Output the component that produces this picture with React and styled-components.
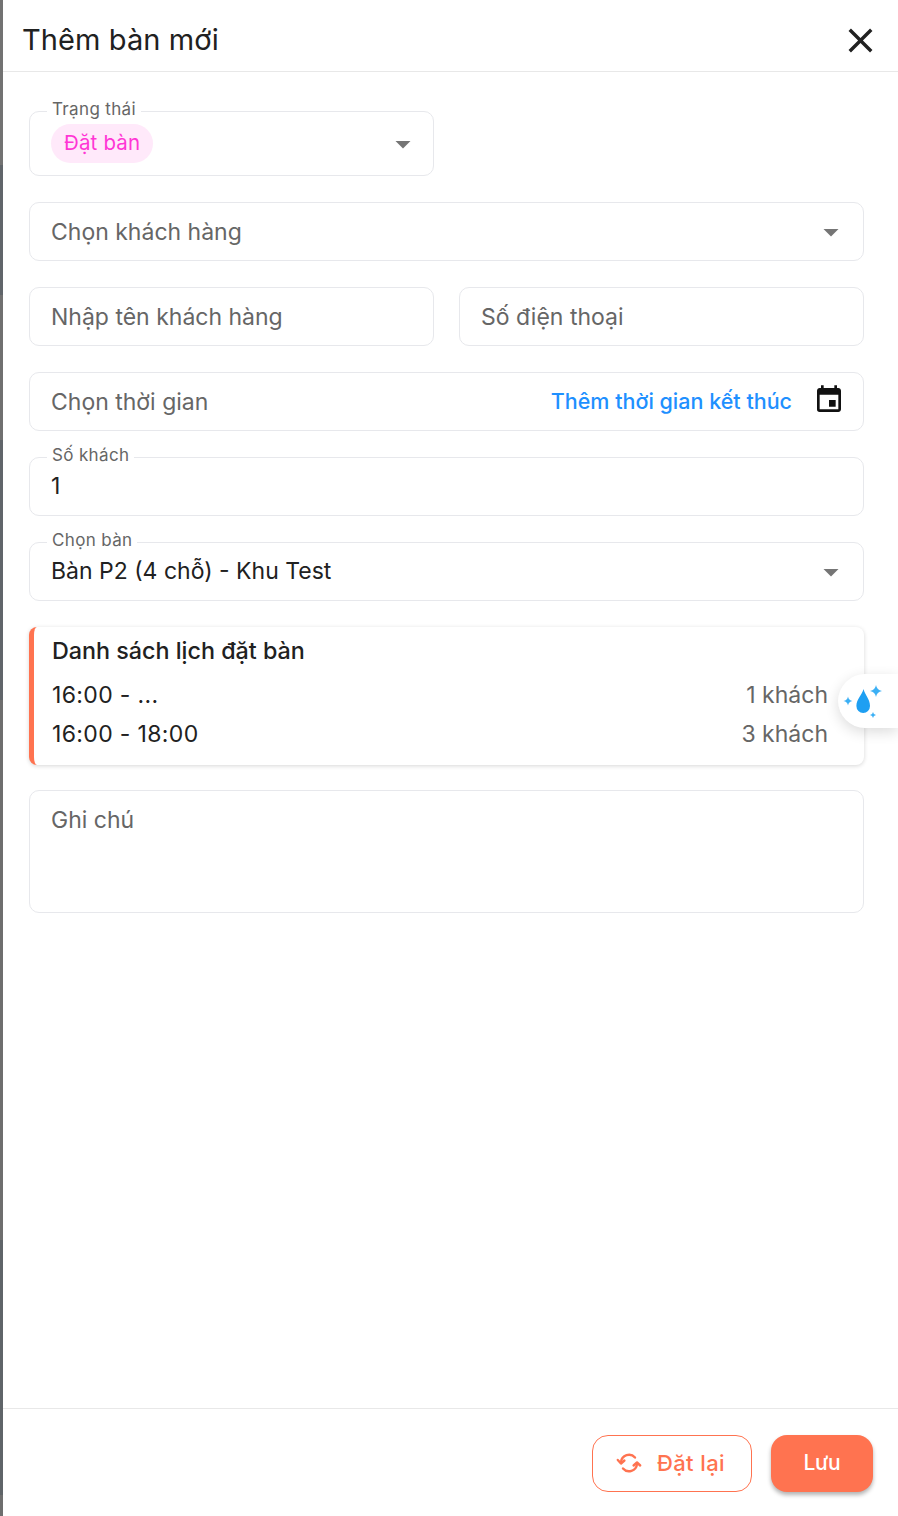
import React from 'react';
import styled, { createGlobalStyle } from 'styled-components';
import { MdClose, MdEvent, MdArrowDropDown } from 'react-icons/md';

const GlobalStyle = createGlobalStyle`
  html, body {
    margin: 0;
    padding: 0;
    background: #fff;
  }
  * {
    box-sizing: border-box;
  }
`;

const Backdrop = styled.div`
  position: relative;
  width: 898px;
  height: 1516px;
  overflow: hidden;
  padding-left: 3px;
  background: linear-gradient(
    #727272 0 165px,
    #60656a 165px 295px,
    #707070 295px 440px,
    #60656a 440px 700px,
    #6e6e6e 700px 1240px,
    #5f6468 1240px 1495px,
    #6e6e6e 1495px
  );
  font-family: Inter, "Noto Sans", sans-serif;
  color: #212121;
`;

const Panel = styled.div`
  display: flex;
  flex-direction: column;
  height: 100%;
  background: #fff;
`;

const Header = styled.header`
  display: flex;
  align-items: center;
  justify-content: space-between;
  height: 72px;
  padding: 8px 17px 0 19px;
  border-bottom: 1px solid #e8e8e8;
  flex-shrink: 0;
`;

const Title = styled.h1`
  margin: 0;
  font-size: 29px;
  font-weight: 400;
  letter-spacing: 0.1px;
  color: #212121;
`;

const CloseButton = styled.button`
  display: flex;
  padding: 0;
  border: 0;
  background: none;
  color: #212121;
  font-size: 41px;
  margin-top: 1px;
`;

const Form = styled.main`
  flex: 1;
  display: flex;
  flex-direction: column;
  gap: 26px;
  padding: 39px 34px 0 26px;
`;

const Row = styled.div`
  display: grid;
  grid-template-columns: 1fr 1fr;
  gap: 25px;
`;

const Field = styled.div`
  position: relative;
  display: flex;
  align-items: center;
  justify-content: space-between;
  height: ${p => p.$height || 59}px;
  padding: 0 ${p => p.$right || 22}px 0 21px;
  border: 1px solid #e7e8ec;
  border-radius: 10px;
  font-size: 23px;
  letter-spacing: 0;
`;

const Legend = styled.label`
  position: absolute;
  top: -13px;
  left: 17px;
  padding: 0 5px;
  background: #fff;
  font-size: 17px;
  letter-spacing: 0.35px;
  line-height: 20px;
  color: #666;
`;

const Placeholder = styled.span`
  color: #666;
`;

const Value = styled.span`
  color: #212121;
  margin-top: -1px;
`;

const Chip = styled.span`
  display: inline-flex;
  align-items: center;
  height: 39px;
  padding: 0 13px 2px;
  border-radius: 20px;
  background: #ffe9fa;
  color: #ff36d5;
  font-size: 20.5px;
  letter-spacing: 0.15px;
`;

const Caret = styled(MdArrowDropDown)`
  flex-shrink: 0;
  font-size: 36px;
  color: #757575;
`;

const AddEnd = styled.span`
  margin-left: auto;
  margin-right: 21px;
  margin-top: -2px;
  font-size: 21.5px;
  letter-spacing: 0;
  font-weight: 500;
  color: #1e90ff;
`;

const CalendarIcon = styled(MdEvent)`
  flex-shrink: 0;
  font-size: 32px;
  color: #111;
  margin-top: -4px;
`;

const ScheduleCard = styled.section`
  display: flex;
  flex-direction: column;
  height: 138px;
  padding: 10px 36px 0 18px;
  margin-bottom: -1px;
  border-left: 5px solid #ff7350;
  border-radius: 8px;
  background: #fff;
  box-shadow: 0 1px 4px rgba(0, 0, 0, 0.16);
`;

const CardTitle = styled.h2`
  margin: 0 0 15px;
  font-size: 23.3px;
  line-height: 28px;
  font-weight: 500;
  letter-spacing: 0;
`;

const Booking = styled.div`
  display: flex;
  justify-content: space-between;
  height: 39px;
  font-size: 23px;
  line-height: 30px;
  letter-spacing: 0.35px;
`;

const Guests = styled.span`
  color: #666;
  letter-spacing: 0;
`;

const NoteField = styled.div`
  height: 123px;
  padding: 15px 21px;
  border: 1px solid #e7e8ec;
  border-radius: 10px;
  font-size: 23px;
  line-height: 28px;
  color: #666;
`;

const Footer = styled.footer`
  display: flex;
  justify-content: flex-end;
  gap: 19px;
  height: 108px;
  padding: 26px 25px 0 0;
  border-top: 1px solid #e8e8e8;
  flex-shrink: 0;
`;

const ResetButton = styled.button`
  display: flex;
  align-items: center;
  justify-content: center;
  gap: 15px;
  width: 160px;
  height: 57px;
  padding: 0 3px 2px 0;
  border: 1px solid #ff7350;
  border-radius: 16px;
  background: #fff;
  color: #ff7350;
  font: 500 22px Inter, "Noto Sans", sans-serif;
  letter-spacing: 0.4px;
`;

const SaveButton = styled.button`
  width: 102px;
  height: 57px;
  padding: 0 0 2px;
  border: 0;
  border-radius: 16px;
  background: #ff7350;
  color: #fff;
  font: 500 21px Inter, "Noto Sans", sans-serif;
  letter-spacing: -0.3px;
  box-shadow: 0 3px 4px rgba(0, 0, 0, 0.3);
`;

const FloatingTab = styled.div`
  position: absolute;
  top: 674px;
  right: 0;
  display: flex;
  align-items: center;
  width: 60px;
  height: 54px;
  padding-left: 5px;
  border-radius: 27px 0 0 27px;
  background: #fff;
  box-shadow: 0 4px 14px rgba(0, 0, 0, 0.14);
`;

const DropSparkle = () => (
  <svg width="40" height="40" viewBox="0 0 40 40">
    <path d="M20.5 8 C22 14 27 18 27 25 A6.8 7 0 0 1 13.4 25 C13.4 18 19 14 20.5 8Z" fill="#1e9ff2" />
    <path d="M33 4 Q33.8 9.2 39 10 Q33.8 10.8 33 16 Q32.2 10.8 27 10 Q32.2 9.2 33 4Z" fill="#3cb0f5" />
    <path d="M5 15.5 Q5.6 19.4 9.5 20 Q5.6 20.6 5 24.5 Q4.4 20.6 .5 20 Q4.4 19.4 5 15.5Z" fill="#3cb0f5" />
    <path d="M30 31 Q30.4 33.6 33 34 Q30.4 34.4 30 37 Q29.6 34.4 27 34 Q29.6 33.6 30 31Z" fill="#3cb0f5" />
  </svg>
);

const ResetIcon = () => (
  <svg width="26" height="26" viewBox="0 0 26 26" fill="none" stroke="currentColor" strokeWidth="2.4" strokeLinecap="round" strokeLinejoin="round">
    <path d="M5 12 A8 8 0 0 1 19 7.5" />
    <path d="M21 14 A8 8 0 0 1 7 18.5" />
    <path d="M1.8 10 L5 13.5 L8.4 10.5" />
    <path d="M24.2 15.5 L21 12.5 L17.6 15.5" />
  </svg>
);

export default function App() {
  return (
    <>
      <GlobalStyle />
      <Backdrop>
        <Panel>
          <Header>
            <Title>Thêm bàn mới</Title>
            <CloseButton><MdClose /></CloseButton>
          </Header>
          <Form>
            <Row>
              <Field $height={65} $right={12}>
                <Legend>Trạng thái</Legend>
                <Chip>Đặt bàn</Chip>
                <Caret />
              </Field>
            </Row>
            <Field $right={14}>
              <Placeholder>Chọn khách hàng</Placeholder>
              <Caret />
            </Field>
            <Row>
              <Field><Placeholder>Nhập tên khách hàng</Placeholder></Field>
              <Field><Placeholder>Số điện thoại</Placeholder></Field>
            </Row>
            <Field $right={18}>
              <Placeholder>Chọn thời gian</Placeholder>
              <AddEnd>Thêm thời gian kết thúc</AddEnd>
              <CalendarIcon />
            </Field>
            <Field>
              <Legend>Số khách</Legend>
              <Value>1</Value>
            </Field>
            <Field $right={14}>
              <Legend>Chọn bàn</Legend>
              <Value>Bàn P2 (4 chỗ) - Khu Test</Value>
              <Caret />
            </Field>
            <ScheduleCard>
              <CardTitle>Danh sách lịch đặt bàn</CardTitle>
              <Booking><span>16:00 - ...</span><Guests>1 khách</Guests></Booking>
              <Booking><span>16:00 - 18:00</span><Guests>3 khách</Guests></Booking>
            </ScheduleCard>
            <NoteField>Ghi chú</NoteField>
          </Form>
          <Footer>
            <ResetButton><ResetIcon />Đặt lại</ResetButton>
            <SaveButton>Lưu</SaveButton>
          </Footer>
        </Panel>
        <FloatingTab><DropSparkle /></FloatingTab>
      </Backdrop>
    </>
  );
}
